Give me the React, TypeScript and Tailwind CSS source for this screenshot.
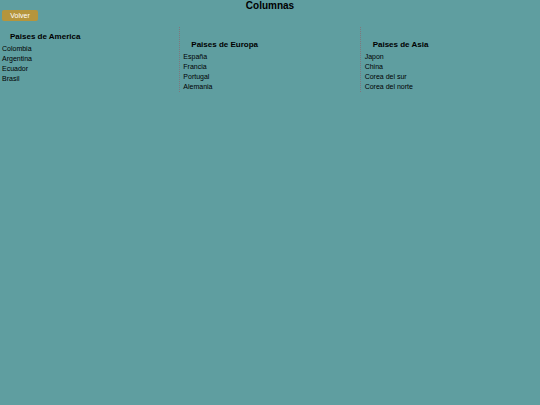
const groups = [
  { title: "Paises de America", items: ["Colombia", "Argentina", "Ecuador", "Brasil"] },
  { title: "Paises de Europa", items: ["España", "Francia", "Portugal", "Alemania"] },
  { title: "Paises de Asia", items: ["Japon", "China", "Corea del sur", "Corea del norte"] },
];

export default function App() {
  return (
    <main className="min-h-screen bg-[#5f9ea0] px-0.5 font-['Liberation_Sans',Arial,sans-serif] text-[7px] text-black">
      <h1 className="text-center text-[10px] leading-3 font-bold">Columnas</h1>
      <button type="button" className="-mt-0.5 block h-[11px] w-9 rounded-xs bg-[#b5953c] text-center leading-[11px] text-white">
        Volver
      </button>
      <div className="mt-1.5 columns-3 gap-2 [column-rule-color:#80767c] [column-rule-style:dotted] [column-rule-width:1px]">
        {groups.map((group, index) => (
          <section key={group.title} className={index === 0 ? "break-inside-avoid pt-1" : "break-inside-avoid pt-3"}>
            <h2 className="px-2 text-[8px] leading-[11px] font-bold">{group.title}</h2>
            <ul className="mt-0.5 leading-[10px]">
              {group.items.map((item) => (
                <li key={item}>{item}</li>
              ))}
            </ul>
          </section>
        ))}
      </div>
    </main>
  );
}
